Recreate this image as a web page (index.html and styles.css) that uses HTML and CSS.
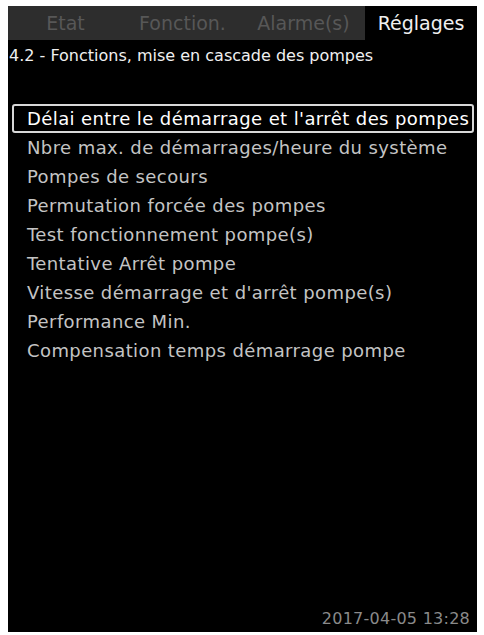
FILE: index.html
```html
<!DOCTYPE html>
<html lang="fr">
<head>
<meta charset="utf-8">
<link rel="stylesheet" href="styles.css">
</head>
<body>
<div class="screen">
  <div class="tabs">
    <div class="tab t1">Etat</div>
    <div class="tab t2">Fonction.</div>
    <div class="tab t3">Alarme(s)</div>
    <div class="tab t4 active">Réglages</div>
  </div>
  <div class="title">4.2 - Fonctions, mise en cascade des pompes</div>
  <ul class="menu">
    <li class="item selected">Délai entre le démarrage et l'arrêt des pompes</li>
    <li class="item">Nbre max. de démarrages/heure du système</li>
    <li class="item">Pompes de secours</li>
    <li class="item">Permutation forcée des pompes</li>
    <li class="item">Test fonctionnement pompe(s)</li>
    <li class="item">Tentative Arrêt pompe</li>
    <li class="item">Vitesse démarrage et d'arrêt pompe(s)</li>
    <li class="item">Performance Min.</li>
    <li class="item">Compensation temps démarrage pompe</li>
  </ul>
  <div class="footer">2017-04-05 13:28</div>
</div>
</body>
</html>
```
FILE: styles.css
```css
html, body {
  margin: 0;
  padding: 0;
  background: #ffffff;
}
.screen {
  margin: 6px 7px 0 8px;
  width: 469px;
  height: 626px;
  background: #000000;
  display: flex;
  flex-direction: column;
  font-family: "DejaVu Sans", sans-serif;
}
.tabs {
  display: flex;
  height: 34px;
  background: #2d2d2d;
}
.tab {
  display: flex;
  align-items: center;
  justify-content: center;
  font-size: 19px;
  color: #575757;
}
.t1 { width: 115px; }
.t2 { width: 119px; }
.t3 { width: 123px; }
.t4 { width: 112px; }
.tab.active {
  background: #000000;
  color: #f0f0f0;
}
.title {
  color: #f0f0f0;
  font-size: 16px;
  padding: 6px 0 0 1px;
  line-height: 19px;
  white-space: nowrap;
}
.menu {
  list-style: none;
  margin: 39px 0 0 4px;
  padding: 0;
  width: 462px;
}
.item {
  color: #c4c4c4;
  font-size: 18px;
  letter-spacing: 0.4px;
  line-height: 25px;
  height: 25px;
  padding: 0 0 0 13px;
  border: 2px solid transparent;
  border-radius: 3px;
  white-space: nowrap;
}
.item.selected {
  color: #ffffff;
  border-color: #d8d8d8;
}
.footer {
  margin-top: auto;
  align-self: flex-end;
  color: #8a8a8a;
  font-size: 16px;
  letter-spacing: 0.25px;
  padding: 0 7px 4px 0;
}
```
